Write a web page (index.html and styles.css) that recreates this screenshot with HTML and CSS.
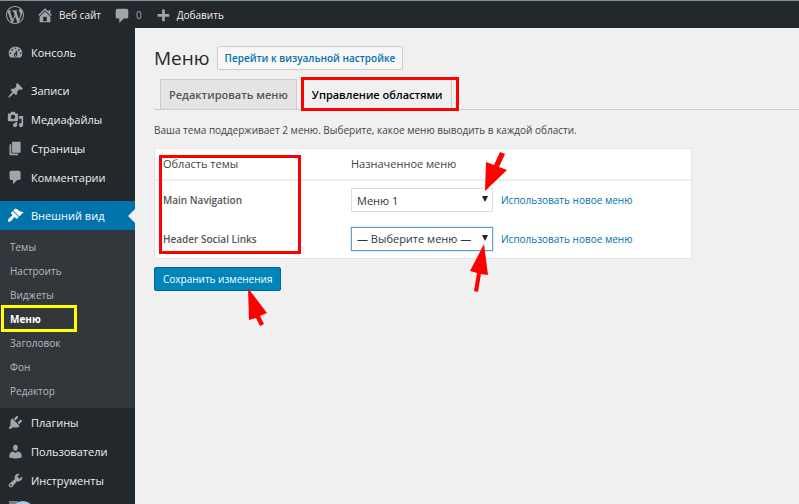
FILE: index.html
```
<!DOCTYPE html>
<html lang="ru">
<head>
    <meta charset="UTF-8">
    <title>Меню</title>
    <link rel="stylesheet" href="styles.css">
</head>
<body>

<!-- верхняя панель -->
<header class="bar">
    <a href="#" class="logo" aria-label="WordPress"><svg viewBox="0 0 20 20"><path d="M20 10c0-5.51-4.49-10-10-10C4.48 0 0 4.49 0 10c0 5.52 4.48 10 10 10 5.51 0 10-4.48 10-10zM7.78 15.37L4.37 6.22c.55-.02 1.17-.08 1.17-.08.5-.06.44-1.13-.06-1.11 0 0-1.45.11-2.37.11-.18 0-.37 0-.58-.01C4.12 2.69 6.87 1.11 10 1.11c2.33 0 4.45.87 6.05 2.34-.68-.11-1.65.39-1.65 1.58 0 .74.45 1.36.9 2.1.35.61.55 1.36.55 2.46 0 1.49-1.4 5-1.4 5l-3.03-8.37c.54-.02.82-.17.82-.17.5-.05.44-1.25-.06-1.22 0 0-1.44.12-2.38.12-.87 0-2.33-.12-2.33-.12-.5-.03-.56 1.2-.06 1.22l.92.08 1.26 3.41zM17.41 10c.24-.64.74-1.87.43-4.25.7 1.29 1.05 2.71 1.05 4.25 0 3.29-1.73 6.24-4.4 7.78.97-2.59 1.94-5.2 2.92-7.78zM6.1 18.09C3.12 16.65 1.11 13.53 1.11 10c0-1.3.23-2.48.72-3.59C3.25 10.3 4.67 14.2 6.1 18.09zm4.03-6.63l2.58 6.98c-.86.29-1.76.45-2.71.45-.79 0-1.57-.11-2.29-.33.81-2.38 1.62-4.74 2.42-7.1z"/></svg></a>
    <a href="#"><svg viewBox="0 0 20 20"><path d="M16 8.5l1.53 1.53-1.06 1.06L10 4.6l-6.47 6.49-1.06-1.06L10 2.5l4 4v-2h2v4zm-6-2.46l6 5.99V18H4v-5.97zM12 17v-5H8v5h4z"/></svg>Веб сайт</a>
    <a href="#" class="count"><svg viewBox="0 0 20 20"><path d="M5 3h10c1.100 0 2 .9 2 2v7c0 1.100-.9 2-2 2h-3l-5 5v-5H5c-1.100 0-2-.9-2-2V5c0-1.100.9-2 2-2z"/></svg>0</a>
    <a href="#"><svg viewBox="0 0 20 20"><path d="M17 9v3h-5v5H9v-5H4V9h5V4h3v5z"/></svg>Добавить</a>
</header>

<div class="wrap">

    <!-- боковое меню -->
    <nav class="side">
        <ul>
            <li><a href="#"><svg viewBox="0 0 20 20"><path d="M3.76 16h12.48c1.1-1.37 1.76-3.11 1.76-5 0-4.42-3.58-8-8-8s-8 3.58-8 8c0 1.89.66 3.63 1.76 5zM10 4c.55 0 1 .45 1 1s-.45 1-1 1-1-.45-1-1 .45-1 1-1zM6 6c.55 0 1 .45 1 1s-.45 1-1 1-1-.45-1-1 .45-1 1-1zm8 0c.55 0 1 .45 1 1s-.45 1-1 1-1-.45-1-1 .45-1 1-1zm-5.370 5.550L12 7v6c0 1.100-.9 2-2 2s-2-.9-2-2c0-.57.24-1.080.63-1.450zM4 10c.55 0 1 .45 1 1s-.45 1-1 1-1-.45-1-1 .45-1 1-1zm12 0c.55 0 1 .45 1 1s-.45 1-1 1-1-.45-1-1 .45-1 1-1zm-5 3c0-.55-.45-1-1-1s-1 .45-1 1 .45 1 1 1 1-.45 1-1z" fill-rule="evenodd"/></svg>Консоль</a></li>
            <li class="space"><a href="#"><svg viewBox="0 0 20 20"><path d="M10.44 3.02l1.82-1.82 6.36 6.35-1.83 1.82c-1.05-.68-2.48-.57-3.41.36l-.75.75c-.92.93-1.04 2.35-.35 3.41l-1.83 1.82-2.41-2.41-2.8 2.79c-.42.42-3.38 2.71-3.8 2.29s1.86-3.39 2.28-3.81l2.79-2.79L4.1 9.36l1.83-1.82c1.05.69 2.48.57 3.4-.36l.75-.75c.93-.92 1.05-2.35.36-3.41z"/></svg>Записи</a></li>
            <li><a href="#"><svg viewBox="0 0 20 20"><path d="M13 11V4c0-.55-.45-1-1-1h-1.67L9 1H5L3.67 3H2c-.55 0-1 .45-1 1v7c0 .55.45 1 1 1h10c.55 0 1-.45 1-1zM7 4.5c1.38 0 2.5 1.12 2.5 2.5S8.38 9.5 7 9.5 4.5 8.38 4.5 7 5.62 4.5 7 4.5zM14 6h5v10.5c0 1.38-1.12 2.5-2.5 2.5S14 17.88 14 16.5s1.12-2.5 2.5-2.5c.17 0 .34.02.5.05V9h-3V6zm-4 8.05V13h2v3.5c0 1.38-1.12 2.5-2.5 2.5S7 17.88 7 16.5 8.12 14 9.5 14c.17 0 .34.02.5.05z" fill-rule="evenodd"/></svg>Медиафайлы</a></li>
            <li><a href="#"><svg viewBox="0 0 20 20"><path d="M6 15V2h10v13H6zm-1 1h8v2H3V5h2v11z"/></svg>Страницы</a></li>
            <li><a href="#"><svg viewBox="0 0 20 20"><path d="M5 2h9c1.1 0 2 .9 2 2v7c0 1.1-.9 2-2 2h-2l-5 5v-5H5c-1.1 0-2-.9-2-2V4c0-1.1.9-2 2-2z"/></svg>Комментарии</a></li>
            <li class="space now">
                <a href="#"><svg viewBox="0 0 20 20"><path d="M14.48 11.06L7.41 3.99l1.5-1.5c.5-.56 2.3-.47 3.51.32 1.21.8 1.43 1.28 2.91 2.1 1.18.64 2.45 1.26 4.45.85zm-.71.71L6.7 4.7 4.93 6.47c-.39.39-.39 1.02 0 1.41l1.06 1.06c.39.39.39 1.03 0 1.42-.6.6-1.43 1.11-2.21 1.69-.35.26-.7.53-1.01.84C1.43 14.23.4 16.08 1.4 17.07c.99 1 2.84-.03 4.18-1.36.31-.31.58-.66.85-1.02.57-.78 1.08-1.61 1.69-2.21.39-.39 1.02-.39 1.41 0l1.06 1.06c.39.39 1.02.39 1.41 0z"/></svg>Внешний вид</a>
                <ul class="sub">
                    <li><a href="#">Темы</a></li>
                    <li><a href="#">Настроить</a></li>
                    <li><a href="#">Виджеты</a></li>
                    <li class="on"><a href="#">Меню</a></li>
                    <li><a href="#">Заголовок</a></li>
                    <li><a href="#">Фон</a></li>
                    <li><a href="#">Редактор</a></li>
                </ul>
            </li>
            <li><a href="#"><svg viewBox="0 0 20 20"><path d="M13.11 4.36L9.87 7.6 8 5.73l3.24-3.24c.35-.34 1.05-.2 1.56.32.52.51.66 1.21.31 1.55zm-8 1.77l.91-1.12 9.01 9.01-1.19.84c-.71.71-2.63 1.16-3.82 1.16H6.14L4.9 17.26c-.59.59-1.54.59-2.12 0-.59-.58-.59-1.53 0-2.12l1.24-1.24v-3.88c0-1.13.4-3.19 1.09-3.89zm7.26 3.97l3.24-3.24c.34-.35 1.04-.21 1.55.31.52.51.66 1.21.31 1.55l-3.24 3.25z"/></svg>Плагины</a></li>
            <li><a href="#"><svg viewBox="0 0 20 20"><path d="M10 9.25c-2.27 0-2.73-3.44-2.73-3.44C7 4.02 7.82 2 9.97 2c2.16 0 2.98 2.02 2.71 3.81 0 0-.41 3.44-2.68 3.44zm0 2.57L12.72 10c2.39 0 4.52 2.33 4.52 4.53v2.49s-3.65 1.13-7.24 1.13c-3.65 0-7.24-1.13-7.24-1.13v-2.49c0-2.25 1.94-4.48 4.47-4.48z"/></svg>Пользователи</a></li>
            <li><a href="#"><svg viewBox="0 0 20 20"><path d="M16.68 9.77c-1.34 1.34-3.3 1.67-4.95.99l-5.41 6.52c-.99.99-2.59.99-3.58 0s-.99-2.59 0-3.57l6.52-5.42c-.68-1.65-.35-3.61.99-4.95 1.28-1.28 3.12-1.62 4.72-1.06l-2.89 2.89 2.82 2.82 2.86-2.87c.53 1.58.18 3.39-1.08 4.65zM3.81 16.21c.4.39 1.04.39 1.43 0 .4-.4.4-1.04 0-1.43-.39-.4-1.03-.4-1.43 0-.39.39-.39 1.03 0 1.43z" fill-rule="evenodd"/></svg>Инструменты</a></li>
        </ul>
        <svg class="last" viewBox="0 0 30 3"><path d="M1 0h9v3H1z" fill="#7d8287"/><circle cx="15" cy="11" r="11" fill="#a9cdec"/></svg>
    </nav>

    <main class="main">
        <div class="head">
            <h1>Меню</h1>
            <a href="#" class="jump">Перейти к визуальной настройке</a>
        </div>

        <nav class="tabs">
            <a href="#">Редактировать меню</a>
            <a href="#" class="now">Управление областями</a>
        </nav>

        <p>Ваша тема поддерживает 2 меню. Выберите, какое меню выводить в каждой области.</p>

        <form>
            <!-- области темы -->
            <div class="box">
                <table>
                    <thead>
                        <tr>
                            <th class="area">Область темы</th>
                            <th>Назначенное меню</th>
                        </tr>
                    </thead>
                    <tbody>
                        <tr>
                            <td><label for="nav">Main Navigation</label></td>
                            <td>
                                <div class="pick">
                                    <div class="drop">
                                        <select id="nav"><option>Меню 1</option></select>
                                        <svg class="arrow a1" viewBox="0 0 24 40"><path d="M2 39L3 10l8 3 6-13 5 2-6 13 8 3z"/></svg>
                                    </div>
                                    <a href="#">Использовать новое меню</a>
                                </div>
                            </td>
                        </tr>
                        <tr>
                            <td><label for="social">Header Social Links</label></td>
                            <td>
                                <div class="pick">
                                    <div class="drop">
                                        <select id="social" class="focus"><option>— Выберите меню —</option></select>
                                        <svg class="arrow a2" viewBox="0 0 20 49"><path d="M15 0l4 31-7-1-3 18-4-1 3-18-7-2z"/></svg>
                                    </div>
                                    <a href="#">Использовать новое меню</a>
                                </div>
                            </td>
                        </tr>
                    </tbody>
                </table>
            </div>

            <div class="save">
                <button type="button">Сохранить изменения</button>
                <svg class="arrow a3" viewBox="0 0 20 39"><path d="M0 0l19 25-7 3 4 8-4 2-4-8-7 2z"/></svg>
            </div>
        </form>
    </main>
</div>

</body>
</html>
```

FILE: styles.css
```
*,
*::after {
margin: 0;
padding: 0;
box-sizing: border-box;
list-style: none;
}

body {
background-color: #f0f0f0;
color: #444;
font: 11px/20px "Open Sans", "Noto Sans", sans-serif;
}

a {
color: #0073aa;
text-decoration: none;
}

svg {
fill: #a0a5aa;
flex: none;
}

/*верхняя панель*/
.bar {
height: 28px;
padding-left: 6px;
display: flex;
gap: 12px;
border-top: 1px solid #7e8e98;
background-color: #23282d;
}

.bar a {
display: flex;
align-items: center;
gap: 5px;
font-size: 10px;
color: #eee;
}

.bar svg {
width: 18px;
height: 18px;
}

.bar .count {
color: #a0a5aa;
}

.wrap {
display: flex;
min-height: calc(100vh - 28px);
}

/*боковое меню*/
.side {
width: 135px;
padding-top: 10px;
flex: none;
background-color: #23282d;
}

.side a {
height: 29px;
padding-left: 7px;
display: flex;
align-items: center;
gap: 7px;
color: #eee;
}

.side svg {
width: 17px;
height: 17px;
}

.side .space {
margin-top: 9px;
}

.side .now > a {
position: relative;
background-color: #0073aa;
color: #fff;
}

.side .now > a svg {
fill: #fff;
}

/*стрелка справа от активного пункта*/
.side .now > a::after {
content: "";
border: 7px solid transparent;
border-right-color: #f0f0f0;
position: absolute;
right: 0;
top: 8px;
}

.side .sub {
padding: 5px 0;
background-color: #32373c;
}

.side .sub a {
height: 24px;
padding-left: 10px;
font-size: 10px;
color: #b4b9be;
}

.side .sub .on {
position: relative;
}

.side .sub .on a {
font-weight: bold;
color: #fff;
}

/*желтая рамка*/
.side .sub .on::after {
content: "";
width: 76px;
height: 27px;
border: 3px solid #ff0;
position: absolute;
left: 1px;
top: -2px;
}

.side .last {
width: 30px;
height: 3px;
margin: 6px 0 0 8px;
display: block;
}

/*содержимое*/
.main {
padding: 16px 0 0 19px;
flex: 1;
}

.head {
display: flex;
align-items: center;
gap: 7px;
}

h1 {
font-size: 19px;
font-weight: normal;
line-height: 28px;
color: #23282d;
}

.jump {
padding: 0 7px;
border: 1px solid #ccc;
border-radius: 2px;
background-color: #f7f7f7;
font-size: 10px;
font-weight: 600;
line-height: 22px;
}

.tabs {
padding: 0 6px;
margin-top: 7px;
display: flex;
gap: 6px;
border-bottom: 1px solid #ccc;
}

.tabs a {
padding: 0 8px;
border: 1px solid #ccc;
border-bottom: 0;
background-color: #e4e4e4;
font-weight: 600;
line-height: 29px;
color: #555;
}

.tabs .now {
margin-bottom: -1px;
padding-bottom: 1px;
position: relative;
background-color: #f0f0f0;
color: #000;
}

/*красные рамки*/
.tabs .now::after,
.box::after {
content: "";
border: 3px solid #f00;
position: absolute;
}

.tabs .now::after {
left: -3px;
right: -8px;
top: -3px;
bottom: -1px;
}

.main p {
margin-top: 10px;
font-size: 10px;
}

.box {
margin: 8px 107px 0 0;
position: relative;
border: 1px solid #e5e5e5;
background-color: #fff;
}

.box::after {
width: 142px;
height: 99px;
left: 4px;
top: 6px;
}

table {
width: 100%;
border-collapse: collapse;
}

th,
td {
padding-left: 8px;
text-align: left;
}

th {
height: 31px;
border-bottom: 2px solid #eee;
font-weight: normal;
}

.area {
width: 188px;
}

td {
height: 39px;
}

td label {
font-size: 10px;
font-weight: 600;
color: #555;
}

.pick {
display: flex;
align-items: center;
gap: 8px;
font-size: 10px;
}

.drop {
width: 142px;
position: relative;
}

/*треугольник списка*/
.drop::after {
content: "";
border: 3px solid transparent;
border-top: 6px solid #222;
border-bottom: 0;
position: absolute;
right: 5px;
top: 8px;
}

select {
width: 100%;
height: 24px;
padding: 0 5px;
display: block;
border: 1px solid #ddd;
background-color: #fff;
appearance: none;
font: 11px "Open Sans", "Noto Sans", sans-serif;
color: #32373c;
}

select.focus {
border-color: #5b9dd9;
box-shadow: 0 0 1px #1e8cbe;
}

.save {
margin-top: 8px;
position: relative;
}

button {
height: 24px;
padding: 0 8px;
display: block;
border: 1px solid #006799;
border-radius: 2px;
background-color: #0085ba;
font: 10px "Open Sans", "Noto Sans", sans-serif;
color: #fff;
}

/*красные стрелки*/
.arrow {
position: absolute;
z-index: 1;
fill: #f00;
}

.a1 {
width: 24px;
height: 40px;
left: 132px;
top: -36px;
}

.a2 {
width: 20px;
height: 49px;
left: 118px;
top: 17px;
}

.a3 {
width: 20px;
height: 39px;
left: 94px;
top: 21px;
}
```
